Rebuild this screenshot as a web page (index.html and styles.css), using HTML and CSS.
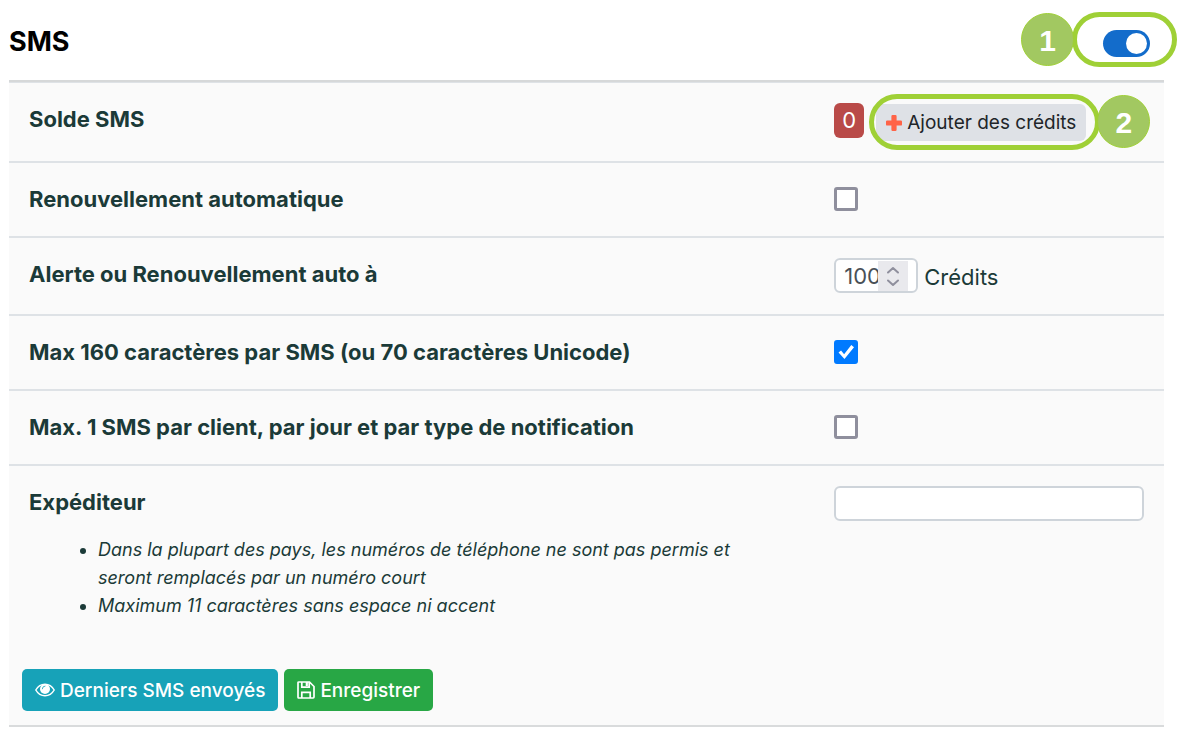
FILE: index.html
```html
<!DOCTYPE html>
<html lang="fr">
<head>
<meta charset="utf-8">
<title>SMS</title>
<link rel="stylesheet" href="styles.css">
</head>
<body>
<form class="panel">
  <header class="panel-header">
    <h1 class="panel-title"><label for="sms-on">SMS</label></h1>
    <div class="callout callout-toggle">
      <input class="switch" type="checkbox" role="switch" id="sms-on" checked>
      <span class="ring"></span>
      <span class="step step-before">1</span>
    </div>
  </header>

  <div class="row">
    <div class="label">Solde SMS</div>
    <div class="control control-balance">
      <span class="balance">0</span>
      <div class="callout callout-credit">
        <button class="btn-add" type="button">
          <svg class="icon-plus" viewBox="0 0 16 16" aria-hidden="true"><path d="M6.600 0h2.800q1.200 0 1.200 1.200V5.400h4.200Q16 5.400 16 6.600v2.800q0 1.200-1.200 1.200h-4.200v4.200q0 1.200-1.200 1.200H6.600q-1.200 0-1.200-1.200v-4.200H1.200Q0 10.600 0 9.400V6.600q0-1.200 1.200-1.200h4.200V1.200Q5.400 0 6.600 0z" fill="#ff6347"/></svg>
          Ajouter des crédits
        </button>
        <span class="ring"></span>
        <span class="step step-after">2</span>
      </div>
    </div>
  </div>

  <div class="row">
    <label class="label" for="renew">Renouvellement automatique</label>
    <div class="control"><input class="check" type="checkbox" id="renew"></div>
  </div>

  <div class="row">
    <label class="label" for="alert">Alerte ou Renouvellement auto à</label>
    <div class="control control-number">
      <div class="number">
        <input class="field field-number" type="number" id="alert" value="100">
        <div class="spinner">
          <button class="spin" type="button" aria-label="Augmenter"><svg class="icon-spin" viewBox="0 0 14 8" aria-hidden="true"><path d="M2 6.500l5-4.500 5 4.500" /></svg></button>
          <button class="spin" type="button" aria-label="Diminuer"><svg class="icon-spin" viewBox="0 0 14 8" aria-hidden="true"><path d="M2 1.500l5 4.500 5-4.500" /></svg></button>
        </div>
      </div>
      <span class="unit">Crédits</span>
    </div>
  </div>

  <div class="row">
    <label class="label" for="max160">Max 160 caractères par SMS (ou 70 caractères Unicode)</label>
    <div class="control"><input class="check" type="checkbox" id="max160" checked></div>
  </div>

  <div class="row">
    <label class="label" for="max1">Max. 1 SMS par client, par jour et par type de notification</label>
    <div class="control"><input class="check" type="checkbox" id="max1"></div>
  </div>

  <div class="section">
    <div class="row row-plain">
      <div class="sender">
        <label class="label" for="sender">Expéditeur</label>
        <ul class="notes">
          <li>Dans la plupart des pays, les numéros de téléphone ne sont pas permis et seront remplacés par un numéro court</li>
          <li>Maximum 11 caractères sans espace ni accent</li>
        </ul>
      </div>
      <div class="control"><input class="field field-text" type="text" id="sender"></div>
    </div>
    <div class="actions">
      <button class="btn btn-info" type="button">
        <svg class="icon-eye" viewBox="0 0 20 14" aria-hidden="true"><path d="M.8 7C2.800 3.500 6.200 1.200 10 1.200S17.200 3.500 19.200 7C17.200 10.500 13.800 12.800 10 12.800S2.800 10.500.8 7z" fill="none" stroke="#fff" stroke-width="1.500" stroke-linejoin="round"/><circle cx="10" cy="6" r="5" fill="#fff"/><path d="M7.300 5.800A2.700 2.700 0 0 1 10 3.100" fill="none" stroke="#17a2b8" stroke-width=".8" stroke-linecap="round"/></svg>
        Derniers SMS envoyés
      </button>
      <button class="btn btn-success" type="submit">
        <svg class="icon-save" viewBox="0 0 18 18" aria-hidden="true"><path d="M1.900 1h10.600L17 5.500v10.600q0 .9-.9.900H1.900Q1 17 1 16.100V1.900Q1 1 1.900 1zM4.800 1v5.200h7.400V1M4.800 17v-5.600h8.400V17" fill="none" stroke="#fff" stroke-width="1.700"/><path d="M8.700 1h2.200v4H8.700z" fill="#fff"/></svg>
        Enregistrer
      </button>
    </div>
  </div>
</form>
</body>
</html>
```
FILE: styles.css
```css
* { box-sizing: border-box; }

body {
  margin: 0;
  background: #fff;
  color: #1b3a38;
  font-family: Inter, "Liberation Sans", sans-serif;
  font-size: 22px;
  line-height: 33px;
}

button, input { font: inherit; }

.panel { margin: 0 16px 0 9px; }

.panel-header {
  display: flex;
  align-items: flex-end;
  justify-content: space-between;
  padding: 25px 14px 22px 0;
  border-bottom: 2px solid #d6d8d9;
}

.panel-title {
  margin: 0;
  color: #000;
  font-size: 27px;
  font-weight: 700;
  line-height: 33px;
}

.row {
  display: grid;
  grid-template-columns: 13fr 5fr;
  align-items: start;
  padding: 20px;
  background: #fafafa;
  border-bottom: 2px solid #dee2e6;
}

.panel-header + .row { border-top: 1px solid #dee2e6; }

.row-plain { border: 0; padding-bottom: 0; }

.label { font-weight: 700; }

.control { display: flex; align-items: center; min-height: 32px; }
.control-balance { gap: 12px; align-items: flex-start; }
.control-number { gap: 6px; align-items: flex-start; }

.unit { padding-top: 3px; }

.balance {
  min-width: 30px;
  height: 35px;
  border-radius: 6px;
  background: #b94a48;
  color: #fff;
  line-height: 35px;
  text-align: center;
}

.callout { position: relative; display: flex; }
.callout-toggle { margin-bottom: 1px; }
.callout-credit { margin-top: 1px; }

.ring {
  position: absolute;
  border: 5px solid #9fd036;
  border-radius: 28px;
  pointer-events: none;
}

.callout-toggle .ring { inset: -18px -27px -10px -31px; }
.callout-credit .ring { inset: -10px -14px -9px -7px; }

.step {
  position: absolute;
  width: 53px;
  height: 53px;
  border: 1px solid #9fd036;
  border-radius: 50%;
  background: #a2c861;
  color: #fff;
  font-family: "Liberation Sans", Arial, sans-serif;
  font-size: 30px;
  font-weight: 700;
  line-height: 54px;
  text-align: center;
}

.step-before { right: 76px; top: -17px; }
.step-after { left: 221px; top: -9px; }

.switch {
  appearance: none;
  display: flex;
  width: 47px;
  height: 27px;
  margin: 0;
  padding: 3px;
  border-radius: 14px;
  background: #136ccb;
}

.switch::before {
  content: "";
  width: 21px;
  height: 21px;
  border-radius: 50%;
  background: #fff;
}

.switch:checked { justify-content: flex-end; }

.btn-add {
  display: flex;
  align-items: center;
  gap: 5px;
  height: 37px;
  padding: 0 10px;
  border: 0;
  border-radius: 6px;
  background: #dee1e6;
  color: #212529;
  font-size: 19px;
  white-space: nowrap;
}

.icon-plus { width: 16px; height: 16px; }

.check {
  appearance: none;
  display: grid;
  place-items: center;
  width: 24px;
  height: 24px;
  margin: 0;
  border: 3px solid #8f8f9d;
  border-radius: 3px;
  background: #fff;
}

.check:checked { border-color: #007aff; background: #007aff; }

.check:checked::before {
  content: "";
  width: 18px;
  height: 18px;
  background: #fff;
  clip-path: polygon(7% 53%, 21% 42%, 38% 62%, 78% 11%, 93% 23%, 40% 89%);
}

.field {
  height: 35px;
  border: 2px solid #ced4da;
  border-radius: 6px;
  background: #fff;
  color: #495057;
}

.field-text { width: 100%; padding: 0 8px; }

.number { position: relative; display: flex; }

.field-number {
  appearance: textfield;
  width: 84px;
  padding: 0 8px;
}

.field-number::-webkit-inner-spin-button { appearance: none; margin: 0; }

.spinner {
  position: absolute;
  top: 3px;
  right: 10px;
  bottom: 2px;
  display: flex;
  flex-direction: column;
  justify-content: center;
  gap: 5px;
  width: 30px;
  background: #e9e9ed;
}

.spin {
  display: flex;
  justify-content: center;
  padding: 0;
  border: 0;
  background: none;
}

.icon-spin {
  width: 14px;
  height: 8px;
  fill: none;
  stroke: #8f8f9d;
  stroke-width: 2;
  stroke-linecap: round;
  stroke-linejoin: round;
}

.sender { display: flex; flex-direction: column; gap: 17px; }

.notes {
  max-width: 740px;
  margin: 0;
  padding-left: 69px;
  font-size: 18px;
  font-style: italic;
  line-height: 28px;
}

.section {
  background: #fafafa;
  border-bottom: 2px solid #d9dbdc;
}

.actions { display: flex; gap: 6px; padding: 49px 13px 14px; }

.btn {
  display: flex;
  align-items: center;
  gap: 5px;
  height: 42px;
  padding: 0 13px;
  border: 0;
  border-radius: 5px;
  color: #fff;
  font-size: 19px;
  font-weight: 500;
  white-space: nowrap;
}

.btn-info { background: #17a2b8; }
.btn-success { background: #28a745; }

.icon-eye { width: 20px; height: 14px; }
.icon-save { width: 18px; height: 18px; }
```
